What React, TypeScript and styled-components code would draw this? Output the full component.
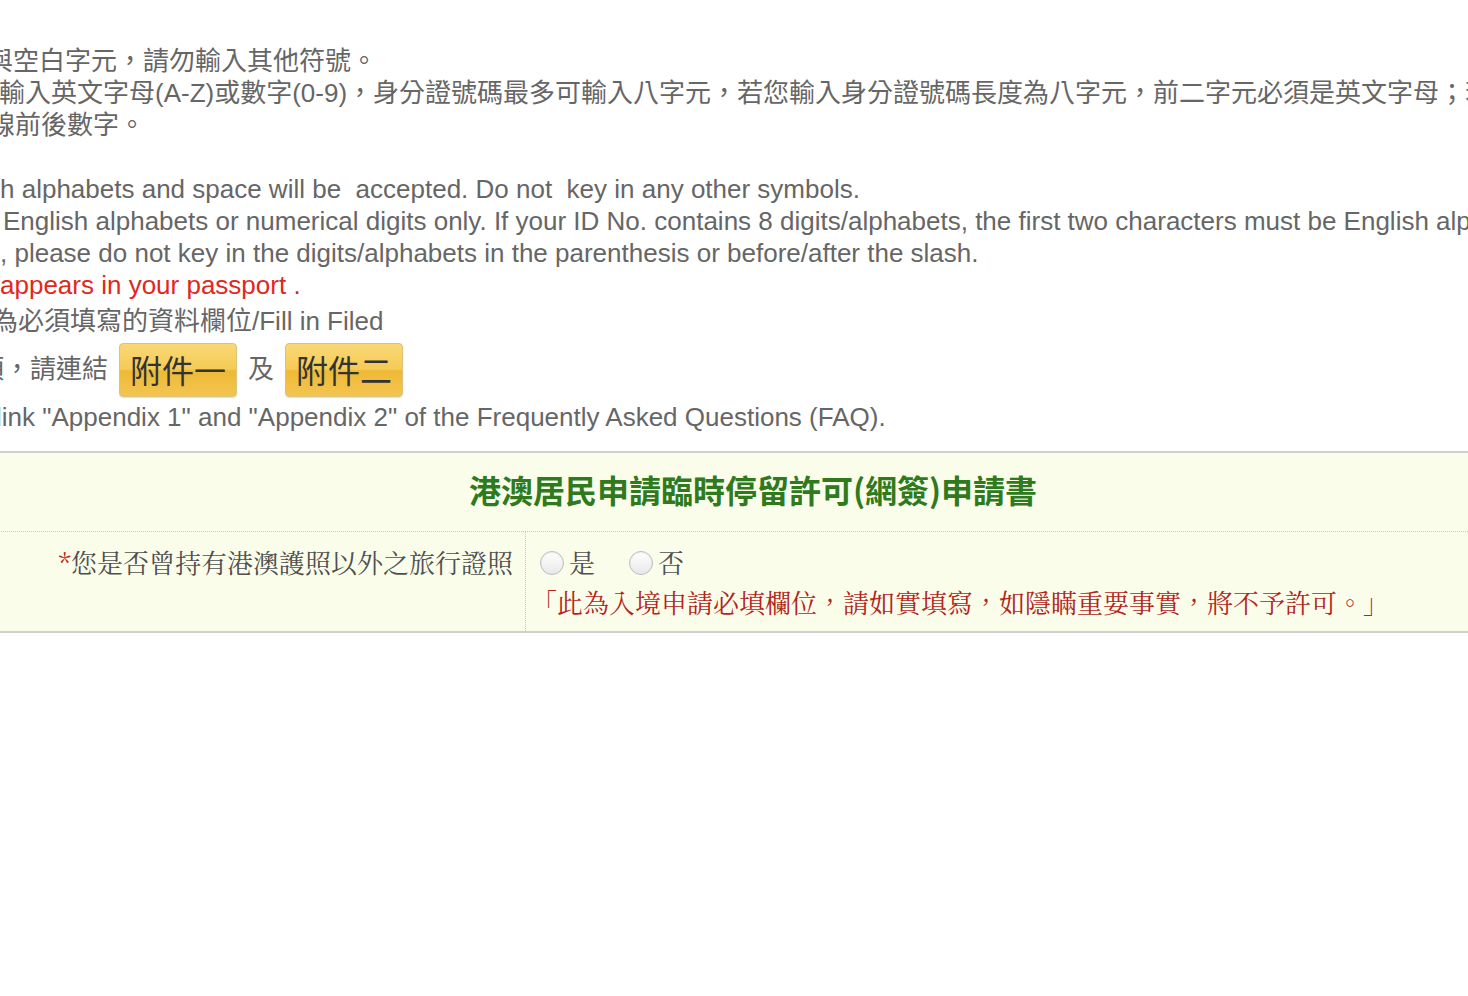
import React from 'react';
import styled, { createGlobalStyle } from 'styled-components';

const GlobalStyle = createGlobalStyle`
	html, body {
		margin: 0;
		padding: 0;
		background: #fff;
	}
	body {
		font-family: "Liberation Sans", "Noto Sans CJK TC", Arial, sans-serif;
		color: #666;
	}
`;

const App: React.FC = () => {
	return (
		<>
			<GlobalStyle />
			<Page>
				<Notes>
					<Line $cut={13}>與空白字元，請勿輸入其他符號。</Line>
					<Line $cut={1}>
						輸入英文字母(A-Z)或數字(0-9)，身分證號碼最多可輸入八字元，若您輸入身分證號碼長度為八字元，前二字元必須是英文字母；若
					</Line>
					<Line $cut={11}>線前後數字。</Line>
					<Blank />
					<Line $cut={0}>h alphabets and space will be  accepted. Do not  key in any other symbols.</Line>
					<Line $cut={-3}>
						English alphabets or numerical digits only. If your ID No. contains 8 digits/alphabets, the first two characters must be English alphabets
					</Line>
					<Line $cut={0}>, please do not key in the digits/alphabets in the parenthesis or before/after the slash.</Line>
					<Line $cut={0} $red>appears in your passport .</Line>
					<Line $cut={8} $tall>為必須填寫的資料欄位/Fill in Filed</Line>
					<LinkRow>
						<LinkText $cut={22}>項，請連結</LinkText>
						<AppendixButton>附件一</AppendixButton>
						<LinkText $cut={0}>及</LinkText>
						<AppendixButton>附件二</AppendixButton>
					</LinkRow>
					<Line $cut={4}>link "Appendix 1" and "Appendix 2" of the Frequently Asked Questions (FAQ).</Line>
				</Notes>

				<FormTable>
					<Heading>港澳居民申請臨時停留許可(網簽)申請書</Heading>
					<Row>
						<Label>
							<Required>*</Required>您是否曾持有港澳護照以外之旅行證照
						</Label>
						<Value>
							<Choices>
								<Choice>
									<Radio />是
								</Choice>
								<Choice>
									<Radio />否
								</Choice>
							</Choices>
							<Warning>「此為入境申請必填欄位，請如實填寫，如隱瞞重要事實，將不予許可。」</Warning>
						</Value>
					</Row>
				</FormTable>
			</Page>
		</>
	);
};

export default App;

const Page = styled.div`
	width: 100%;
	height: 996px;
	overflow: hidden;
`;

const Notes = styled.div`
	padding-top: 45px;
`;

const Line = styled.div<{ $cut: number; $red?: boolean; $tall?: boolean }>`
	margin-left: ${(p) => -p.$cut}px;
	white-space: pre;
	font-size: 26px;
	line-height: ${(p) => (p.$tall ? '40px' : '32px')};
	color: ${(p) => (p.$red ? '#e0281d' : '#666')};
`;

const Blank = styled.div`
	height: 32px;
`;

const LinkRow = styled.div`
	display: flex;
	align-items: flex-start;
	gap: 11px;
	height: 60px;
	padding-top: 2px;
	box-sizing: border-box;
	white-space: nowrap;
`;

const LinkText = styled.span<{ $cut: number }>`
	margin-left: ${(p) => -p.$cut}px;
	font-size: 26px;
	line-height: 52px;
`;

const AppendixButton = styled.span`
	display: inline-flex;
	align-items: center;
	justify-content: center;
	width: 118px;
	height: 54px;
	padding-bottom: 3px;
	box-sizing: border-box;
	border: 1px solid #dcc27a;
	border-radius: 4px;
	background: linear-gradient(to bottom, #f9d876 0%, #f5cb55 48%, #eeb936 52%, #f3c550 100%);
	color: #333;
	font-size: 32px;
	font-family: "Noto Sans CJK TC", sans-serif;
	box-shadow: 0 1px 1px rgba(0, 0, 0, 0.12);
`;

const FormTable = styled.div`
	margin: 18px 0 0 -40px;
	width: 1586px;
	background: #fbfdeb;
	border-top: 2px solid #cfcfcf;
	border-bottom: 2px solid #cfcfcf;
`;

const Heading = styled.div`
	height: 79px;
	padding-bottom: 6px;
	box-sizing: border-box;
	display: flex;
	align-items: center;
	justify-content: center;
	border-bottom: 1px dotted #c8c8c8;
	font-family: "Noto Sans CJK TC", sans-serif;
	font-size: 32px;
	font-weight: 700;
	color: #2e7a1c;
`;

const Row = styled.div`
	display: grid;
	grid-template-columns: 565px 1fr;
`;

const Label = styled.div`
	padding: 10px 12px 0 0;
	text-align: right;
	font-family: "Noto Serif CJK TC", "Liberation Serif", "Noto Sans CJK TC", serif;
	font-size: 26px;
	line-height: 40px;
	color: #4f4f4f;
`;

const Required = styled.span`
	color: #c4241b;
`;

const Value = styled.div`
	border-left: 1px dotted #c8c8c8;
	padding: 10px 14px 9px;
	font-family: "Noto Serif CJK TC", "Liberation Serif", "Noto Sans CJK TC", serif;
	font-size: 26px;
	line-height: 40px;
`;

const Choices = styled.div`
	display: flex;
	align-items: center;
	gap: 34px;
	color: #4f4f4f;
`;

const Choice = styled.label`
	display: inline-flex;
	align-items: center;
	gap: 5px;
`;

const Radio = styled.span`
	display: inline-block;
	width: 22px;
	height: 22px;
	border-radius: 50%;
	border: 1px solid #bdbdbd;
	background: linear-gradient(to bottom, #ffffff, #e8e8e8);
	box-shadow: inset 0 1px 2px rgba(0, 0, 0, 0.08);
	margin-top: 2px;
`;

const Warning = styled.div`
	margin-left: -9px;
	color: #b3251c;
	font-size: 26px;
`;
